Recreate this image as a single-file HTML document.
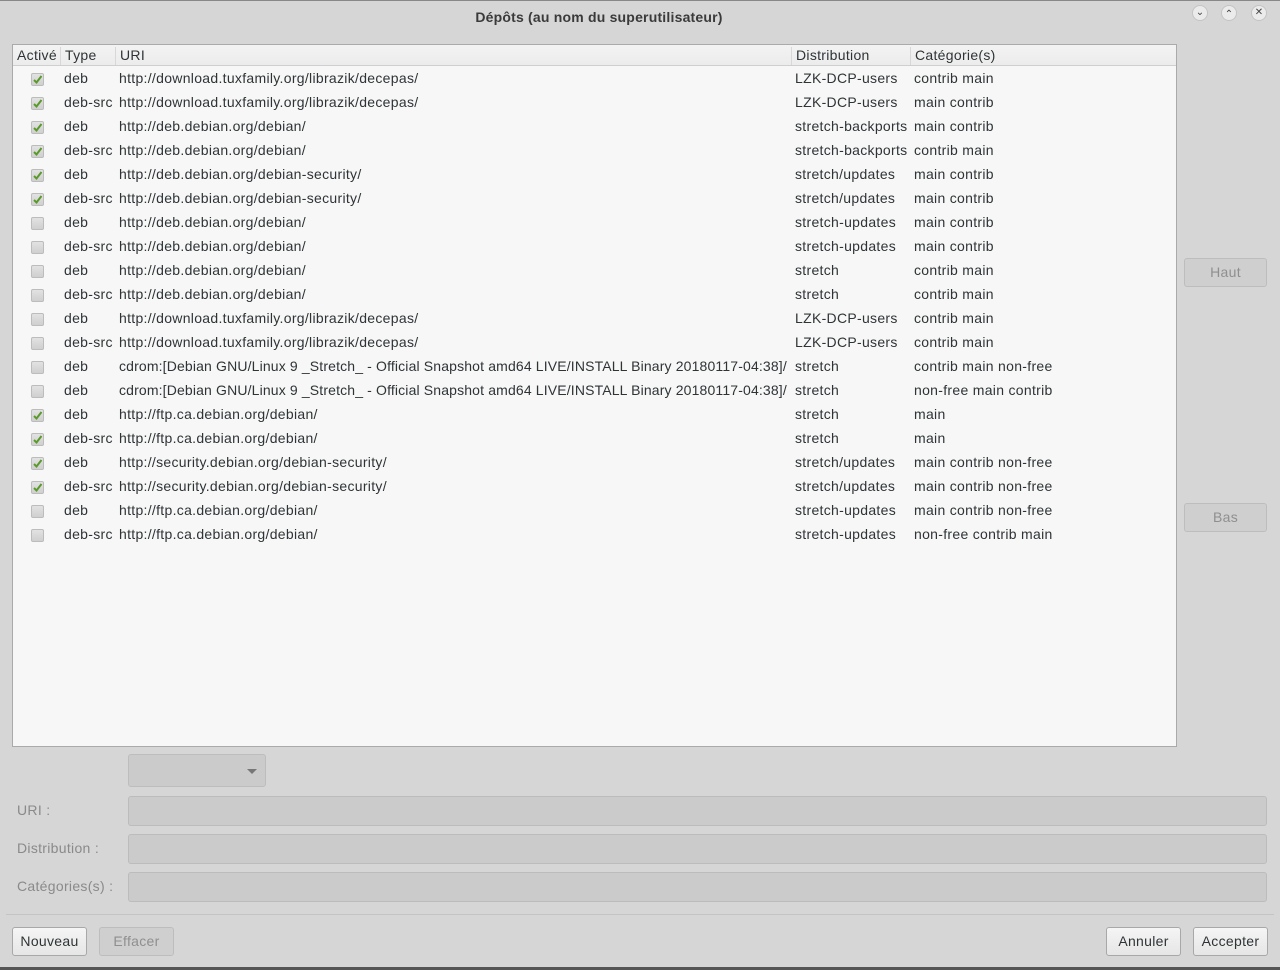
<!DOCTYPE html>
<html><head><meta charset="utf-8"><style>
*{box-sizing:border-box;margin:0;padding:0}
body{width:1280px;height:970px;background:#d6d6d6;font-family:"Liberation Sans",sans-serif;font-size:14px;color:#2e3436;position:relative;overflow:hidden;letter-spacing:0.3px}
.a{position:absolute;white-space:nowrap}
.title{left:0;width:1198px;top:9px;text-align:center;font-weight:bold;font-size:14px;color:#3a3a3a;letter-spacing:0.2px}
.wb{position:absolute;top:5px;width:16px;height:16px;border-radius:50%;border:1px solid #c4c4c4;background:#ebebeb;font-size:10px;text-align:center;line-height:14px;color:#444;letter-spacing:0}
.tbl{position:absolute;left:12px;top:44px;width:1165px;height:703px;background:#f7f7f7;border:1px solid #aaa;overflow:hidden}
.hdr{position:absolute;left:0;top:0;width:100%;height:21px;background:linear-gradient(#f3f3f3,#ececec);border-bottom:1px solid #cfcfcf}
.hs{position:absolute;top:2px;width:1px;height:18px;background:#d8d8d8}
.row{position:absolute;left:0;width:100%;height:24px}
.row span{position:absolute;top:3px;white-space:nowrap;overflow:hidden}
.cb{position:absolute;left:18px;top:6px;width:13px;height:13px;border:1px solid #bcbcbc;border-radius:2px;background:linear-gradient(#e2e2e2,#cfcfcf)}
.btn{position:absolute;border:1px solid #a8a8a8;border-radius:3px;background:linear-gradient(#f5f5f5,#e6e6e6);text-align:center;line-height:26px;height:29px}
.dis{background:#cfcfcf;border-color:#bdbdbd;color:#8f8f8f}
.inp{position:absolute;left:128px;width:1139px;height:30px;background:#cbcbcb;border:1px solid #bcbcbc;border-radius:3px}
.lbl{position:absolute;left:17px;color:#8a8a8a}
</style></head><body>
<div style="position:absolute;left:0;top:0;width:1280px;height:1px;background:#888"></div>
<div class="a title">Dépôts (au nom du superutilisateur)</div>
<div class="wb" style="left:1192px">&#8964;</div>
<div class="wb" style="left:1221px;line-height:17px">&#8963;</div>
<div class="wb" style="left:1251px">&#10005;</div>

<div class="tbl">
<div class="hdr">
<span class="a" style="left:4px;top:2px">Activé</span><div class="hs" style="left:47px"></div>
<span class="a" style="left:52px;top:2px">Type</span><div class="hs" style="left:102px"></div>
<span class="a" style="left:107px;top:2px">URI</span><div class="hs" style="left:778px"></div>
<span class="a" style="left:783px;top:2px">Distribution</span><div class="hs" style="left:897px"></div>
<span class="a" style="left:902px;top:2px">Catégorie(s)</span>
</div>
<div id="rows"></div>
</div>

<div class="btn dis" style="left:1184px;top:258px;width:83px">Haut</div>
<div class="btn dis" style="left:1184px;top:503px;width:83px">Bas</div>

<div style="position:absolute;left:128px;top:754px;width:138px;height:33px;background:#cbcbcb;border:1px solid #bdbdbd;border-radius:3px"><div style="position:absolute;right:8px;top:14px;border-left:5px solid transparent;border-right:5px solid transparent;border-top:5px solid #777"></div></div>
<div class="lbl" style="top:802px">URI :</div><div class="inp" style="top:796px"></div>
<div class="lbl" style="top:840px">Distribution :</div><div class="inp" style="top:834px"></div>
<div class="lbl" style="top:878px">Catégories(s) :</div><div class="inp" style="top:872px"></div>
<div style="position:absolute;left:6px;top:914px;width:1268px;height:1px;background:#c4c4c4"></div>
<div class="btn" style="left:12px;top:927px;width:75px">Nouveau</div>
<div class="btn dis" style="left:99px;top:927px;width:75px">Effacer</div>
<div class="btn" style="left:1106px;top:927px;width:75px">Annuler</div>
<div class="btn" style="left:1193px;top:927px;width:75px">Accepter</div>
<div style="position:absolute;left:0;top:967px;width:1280px;height:3px;background:#555"></div>

<script>
var T="http://download.tuxfamily.org/librazik/decepas/",D="http://deb.debian.org/debian/",S="http://deb.debian.org/debian-security/",C="cdrom:[Debian GNU/Linux 9 _Stretch_ - Official Snapshot amd64 LIVE/INSTALL Binary 20180117-04:38]/",F="http://ftp.ca.debian.org/debian/",X="http://security.debian.org/debian-security/";
var r=[[1,"deb",T,"LZK-DCP-users","contrib main"],[1,"deb-src",T,"LZK-DCP-users","main contrib"],[1,"deb",D,"stretch-backports","main contrib"],[1,"deb-src",D,"stretch-backports","contrib main"],[1,"deb",S,"stretch/updates","main contrib"],[1,"deb-src",S,"stretch/updates","main contrib"],[0,"deb",D,"stretch-updates","main contrib"],[0,"deb-src",D,"stretch-updates","main contrib"],[0,"deb",D,"stretch","contrib main"],[0,"deb-src",D,"stretch","contrib main"],[0,"deb",T,"LZK-DCP-users","contrib main"],[0,"deb-src",T,"LZK-DCP-users","contrib main"],[0,"deb",C,"stretch","contrib main non-free"],[0,"deb",C,"stretch","non-free main contrib"],[1,"deb",F,"stretch","main"],[1,"deb-src",F,"stretch","main"],[1,"deb",X,"stretch/updates","main contrib non-free"],[1,"deb-src",X,"stretch/updates","main contrib non-free"],[0,"deb",F,"stretch-updates","main contrib non-free"],[0,"deb-src",F,"stretch-updates","non-free contrib main"]];
var h="";r.forEach(function(x,i){var ck=x[0]?'<svg width="11" height="11" style="position:absolute;left:0;top:0"><path d="M2 6 L4.5 8.5 L9.5 2" stroke="#5a9a2a" stroke-width="2" fill="none"/></svg>':'';
var uriStyle=x[2]==C?'letter-spacing:0.15px':'';
h+='<div class="row" style="top:'+(22+i*24)+'px"><div class="cb">'+ck+'</div><span style="left:51px">'+x[1]+'</span><span style="left:106px;width:672px;'+uriStyle+'">'+x[2]+'</span><span style="left:782px;width:115px">'+x[3]+'</span><span style="left:901px">'+x[4]+'</span></div>';});
document.getElementById("rows").innerHTML=h;
</script>
</body></html>
